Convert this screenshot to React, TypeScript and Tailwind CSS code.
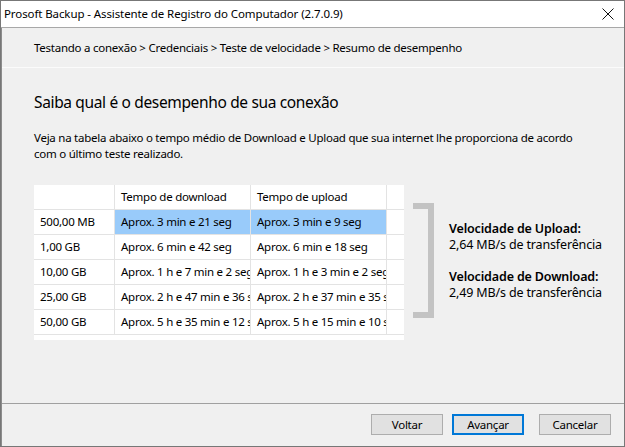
import React from "react";

const rows = [
  { size: "500,00 MB", down: "Aprox. 3 min e 21 seg", up: "Aprox. 3 min e 9 seg", selected: true },
  { size: "1,00 GB", down: "Aprox. 6 min e 42 seg", up: "Aprox. 6 min e 18 seg" },
  { size: "10,00 GB", down: "Aprox. 1 h e 7 min e 2 seg", up: "Aprox. 1 h e 3 min e 2 seg" },
  { size: "25,00 GB", down: "Aprox. 2 h e 47 min e 36 seg", up: "Aprox. 2 h e 37 min e 35 seg" },
  { size: "50,00 GB", down: "Aprox. 5 h e 35 min e 12 seg", up: "Aprox. 5 h e 15 min e 10 seg" },
];

const font = { fontFamily: '"Segoe UI", "Noto Sans", "Open Sans", sans-serif' };

const App = () => {
  return (
    <div
      style={font}
      className="w-[625px] h-[447px] flex flex-col bg-[#f0f0f0] border border-[#777777] text-black text-[11.5px] tracking-[-0.25px] overflow-hidden"
    >
      {/* title bar */}
      <div className="h-[27px] shrink-0 bg-white flex items-center justify-between pl-[3px] pr-[9px] border-b border-[#a8a8a8]">
        <span className="tracking-[-0.1px]">Prosoft Backup - Assistente de Registro do Computador (2.7.0.9)</span>
        <svg width="12" height="12" viewBox="0 0 12 12" className="mr-[1px]">
          <path d="M0.5 0.5 L11.5 11.5 M11.5 0.5 L0.5 11.5" stroke="#111" strokeWidth="1" />
        </svg>
      </div>

      <div className="flex-1 flex flex-col border-l border-[#8c8c8c]">
        {/* breadcrumb */}
        <div className="h-[40px] shrink-0 flex items-center pl-[32px] border-b border-[#fbfbfb]">
          Testando a conexão &gt; Credenciais &gt; Teste de velocidade &gt; Resumo de desempenho
        </div>

        <div className="flex-1 flex flex-col pl-[32px] pt-[24px]">
          <h1 className="text-[15.5px] tracking-[-0.35px] leading-[20px]">Saiba qual é o desempenho de sua conexão</h1>
          <p className="mt-[18px] w-[580px] leading-[16px]">
            Veja na tabela abaixo o tempo médio de Download e Upload que sua internet lhe proporciona de acordo
            <br />
            com o último teste realizado.
          </p>

          <div className="flex items-center mt-[23px]">
            <div className="w-[370px] bg-white pb-[5px]">
              <div className="flex h-[25px] border-b border-[#e3e3e3]">
                <div className="w-[81px] border-r border-[#e3e3e3]" />
                <div className="w-[136px] border-r border-[#e3e3e3] pl-[6px] flex items-center">Tempo de download</div>
                <div className="w-[136px] border-r border-[#e3e3e3] pl-[6px] flex items-center">Tempo de upload</div>
              </div>
              {rows.map((r) => (
                <div key={r.size} className="flex h-[25px] border-b border-[#e3e3e3]">
                  <div className="w-[81px] border-r border-[#e3e3e3] pl-[6px] flex items-center whitespace-nowrap overflow-hidden">
                    {r.size}
                  </div>
                  <div
                    className={`w-[136px] border-r border-[#e3e3e3] pl-[6px] flex items-center whitespace-nowrap overflow-hidden ${
                      r.selected ? "bg-[#99cbfa]" : ""
                    }`}
                  >
                    {r.down}
                  </div>
                  <div
                    className={`w-[136px] border-r border-[#e3e3e3] pl-[6px] flex items-center whitespace-nowrap overflow-hidden ${
                      r.selected ? "bg-[#99cbfa]" : ""
                    }`}
                  >
                    {r.up}
                  </div>
                </div>
              ))}
            </div>

            <div className="ml-[9px] mb-[4px] w-[21px] h-[115px] border-t-[6px] border-r-[6px] border-b-[6px] border-[#c3c3c3]" />

            <div className="ml-[15px] mb-[4px] text-[12.5px] tracking-[-0.15px] leading-[16px]">
              <div className="font-semibold">Velocidade de Upload:</div>
              <div>2,64 MB/s de transferência</div>
              <div className="font-semibold mt-[16px]">Velocidade de Download:</div>
              <div>2,49 MB/s de transferência</div>
            </div>
          </div>
        </div>

        {/* footer */}
        <div className="h-[43px] shrink-0 border-t border-[#a0a0a0] flex justify-end items-start pt-[10px] pr-[13px]">
          <button className="w-[72px] h-[21px] bg-[#e1e1e1] border border-[#adadad]">Voltar</button>
          <button className="ml-[9px] w-[72px] h-[21px] bg-[#e1e1e1] border-2 border-[#0078d7]">Avançar</button>
          <button className="ml-[15px] w-[72px] h-[21px] bg-[#e1e1e1] border border-[#adadad]">Cancelar</button>
        </div>
      </div>
    </div>
  );
};

export default App;
